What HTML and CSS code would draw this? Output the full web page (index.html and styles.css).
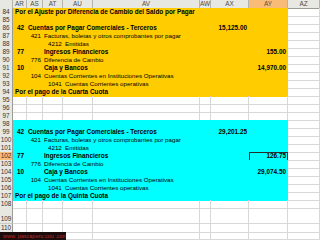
FILE: index.html
```html
<!DOCTYPE html>
<html>
<head>
<meta charset="utf-8">
<link rel="stylesheet" href="styles.css">
</head>
<body>
<div class="sheet">
  <div class="row hdr">
    <div class="corner"></div><div class="ch">AR</div><div class="ch">AS</div><div class="ch">AT</div><div class="ch">AU</div><div class="ch">AV</div><div class="ch">AW</div><div class="ch">AX</div><div class="ch sel">AY</div><div class="ch">AZ</div>
  </div>

  <div class="row"><div class="rh">84</div><div class="y s8 b pl2">Por el Ajuste por Diferencia de Cambio del Saldo por Pagar</div><div class="g"></div></div>
  <div class="row"><div class="rh">85</div><div class="y s8"></div><div class="g"></div></div>
  <div class="row"><div class="rh">86</div><div class="y b pl4">42</div><div class="y s5 b pl1">Cuentas por Pagar Comerciales - Terceros</div><div class="y b r">15,125.00</div><div class="y"></div><div class="g"></div></div>
  <div class="row"><div class="rh">87</div><div class="y"></div><div class="y r">421</div><div class="y s6 pl1">Facturas, boletas y otros comprobantes por pagar</div><div class="g"></div></div>
  <div class="row"><div class="rh">88</div><div class="y"></div><div class="y"></div><div class="y pl5">4212</div><div class="y s5 pl2">Emitidas</div><div class="g"></div></div>
  <div class="row"><div class="rh">89</div><div class="y b pl4">77</div><div class="y"></div><div class="y s5 b pl1">Ingresos Financieros</div><div class="y b r">155.00</div><div class="g"></div></div>
  <div class="row"><div class="rh">90</div><div class="y"></div><div class="y r">776</div><div class="y s6 pl1">Diferencia de Cambio</div><div class="g"></div></div>
  <div class="row"><div class="rh">91</div><div class="y b pl4">10</div><div class="y"></div><div class="y s5 b pl1">Caja y Bancos</div><div class="y b r">14,970.00</div><div class="g"></div></div>
  <div class="row"><div class="rh">92</div><div class="y"></div><div class="y r">104</div><div class="y s6 pl1">Cuentas Corrientes en Instituciones Operativas</div><div class="g"></div></div>
  <div class="row"><div class="rh">93</div><div class="y"></div><div class="y"></div><div class="y pl5">1041</div><div class="y s5 pl2">Cuentas Corrientes operativas</div><div class="g"></div></div>
  <div class="row"><div class="rh">94</div><div class="y s8 b pl2">Por el pago de la Cuarta Cuota</div><div class="g"></div></div>

  <div class="row"><div class="rh">95</div><div class="g"></div><div class="g"></div><div class="g"></div><div class="g"></div><div class="g"></div><div class="g"></div><div class="g"></div><div class="g"></div><div class="g"></div></div>
  <div class="row"><div class="rh">96</div><div class="g"></div><div class="g"></div><div class="g"></div><div class="g"></div><div class="g"></div><div class="g"></div><div class="g"></div><div class="g"></div><div class="g"></div></div>
  <div class="row"><div class="rh">97</div><div class="g"></div><div class="g"></div><div class="g"></div><div class="g"></div><div class="g"></div><div class="g"></div><div class="g"></div><div class="g"></div><div class="g"></div></div>

  <div class="row"><div class="rh">98</div><div class="c s8"></div><div class="g"></div></div>
  <div class="row"><div class="rh">99</div><div class="c b pl4">42</div><div class="c s5 b pl1">Cuentas por Pagar Comerciales - Terceros</div><div class="c b r">29,201.25</div><div class="c"></div><div class="g"></div></div>
  <div class="row"><div class="rh">100</div><div class="c"></div><div class="c r">421</div><div class="c s6 pl1">Facturas, boletas y otros comprobantes por pagar</div><div class="g"></div></div>
  <div class="row"><div class="rh">101</div><div class="c"></div><div class="c"></div><div class="c pl5">4212</div><div class="c s5 pl2">Emitidas</div><div class="g"></div></div>
  <div class="row"><div class="rh sel">102</div><div class="c b pl4">77</div><div class="c"></div><div class="c s5 b pl1">Ingresos Financieros</div><div class="c b r active">126.75</div><div class="g"></div></div>
  <div class="row"><div class="rh">103</div><div class="c"></div><div class="c r">776</div><div class="c s6 pl1">Diferencia de Cambio</div><div class="g"></div></div>
  <div class="row"><div class="rh">104</div><div class="c b pl4">10</div><div class="c"></div><div class="c s5 b pl1">Caja y Bancos</div><div class="c b r">29,074.50</div><div class="g"></div></div>
  <div class="row"><div class="rh">105</div><div class="c"></div><div class="c r">104</div><div class="c s6 pl1">Cuentas Corrientes en Instituciones Operativas</div><div class="g"></div></div>
  <div class="row"><div class="rh">106</div><div class="c"></div><div class="c"></div><div class="c pl5">1041</div><div class="c s5 pl2">Cuentas Corrientes operativas</div><div class="g"></div></div>
  <div class="row"><div class="rh">107</div><div class="c s8 b pl2">Por el pago de la Quinta Cuota</div><div class="g"></div></div>

  <div class="row"><div class="rh">108</div><div class="g"></div><div class="g"></div><div class="g"></div><div class="g"></div><div class="g"></div><div class="g"></div><div class="g"></div><div class="g"></div><div class="g"></div></div>
  <div class="row tall"><div class="rh">109</div><div class="g"></div><div class="g"></div><div class="g"></div><div class="g"></div><div class="g"></div><div class="g"></div><div class="g"></div><div class="g"></div><div class="g"></div></div>
  <div class="row"><div class="rh">110</div><div class="g"></div><div class="g"></div><div class="g"></div><div class="g"></div><div class="g"></div><div class="g"></div><div class="g"></div><div class="g"></div><div class="g"></div></div>
  <div class="row"><div class="rh"></div><div class="g"></div><div class="g"></div><div class="g"></div><div class="g"></div><div class="g"></div><div class="g"></div><div class="g"></div><div class="g"></div><div class="g"></div></div>

  <div class="stamp">www. pascaperu.cou .com</div>
</div>
</body>
</html>
```

FILE: styles.css
```css
* { box-sizing: border-box; }
html, body { margin: 0; padding: 0; background: #fff; }
body {
  font-family: "Liberation Sans", Arial, sans-serif;
  font-size: 6.2px;
  color: #000;
}
.sheet {
  position: relative;
  width: 320px;
  height: 240px;
  overflow: hidden;
}
.row {
  display: grid;
  grid-template-columns: 13px 14px 16px 20px 30px 107px 11px 38px 39px 32px;
  height: 8px;
  line-height: 8px;
}
.row.tall { height: 16px; }
.row > div { white-space: nowrap; min-width: 0; }

.corner, .ch {
  background: #e8e8e2;
  border-right: 1px solid #b4b4ac;
  border-bottom: 1px solid #9c9c96;
}
.ch {
  text-align: center;
  color: #4a4a4a;
  font-size: 6.4px;
}
.ch.sel { background: #f8bb78; color: #5a4a3a; }

.rh {
  background: #e8e8e2;
  border-right: 1px solid #9c9c96;
  border-bottom: 1px solid #cacac4;
  color: #333;
  font-size: 6.4px;
  display: flex;
  align-items: flex-end;
  justify-content: center;
}
.rh.sel { background: #f8bb78; }

.g {
  border-right: 1px solid #d8d8d8;
  border-bottom: 1px solid #d8d8d8;
}
.y { background: #ffcc00; }
.c { background: #00ffff; }

.s5 { grid-column: span 5; }
.s6 { grid-column: span 6; }
.s8 { grid-column: span 8; }

.b { font-weight: bold; font-size: 6.4px; }
.r { text-align: right; padding-right: 2px; }
.pl1 { padding-left: 1px; }
.pl2 { padding-left: 2px; }
.pl4 { padding-left: 4px; }
.pl5 { padding-left: 5px; }

.active {
  box-shadow: inset 0 0 0 1px #2a2a2a;
}

.stamp {
  position: absolute;
  left: 0;
  bottom: 0;
  width: 66px;
  height: 8px;
  background: #1c0c0c;
  color: #b82a2a;
  font-size: 5.5px;
  line-height: 8px;
  padding-left: 3px;
  white-space: nowrap;
  overflow: hidden;
}
```
